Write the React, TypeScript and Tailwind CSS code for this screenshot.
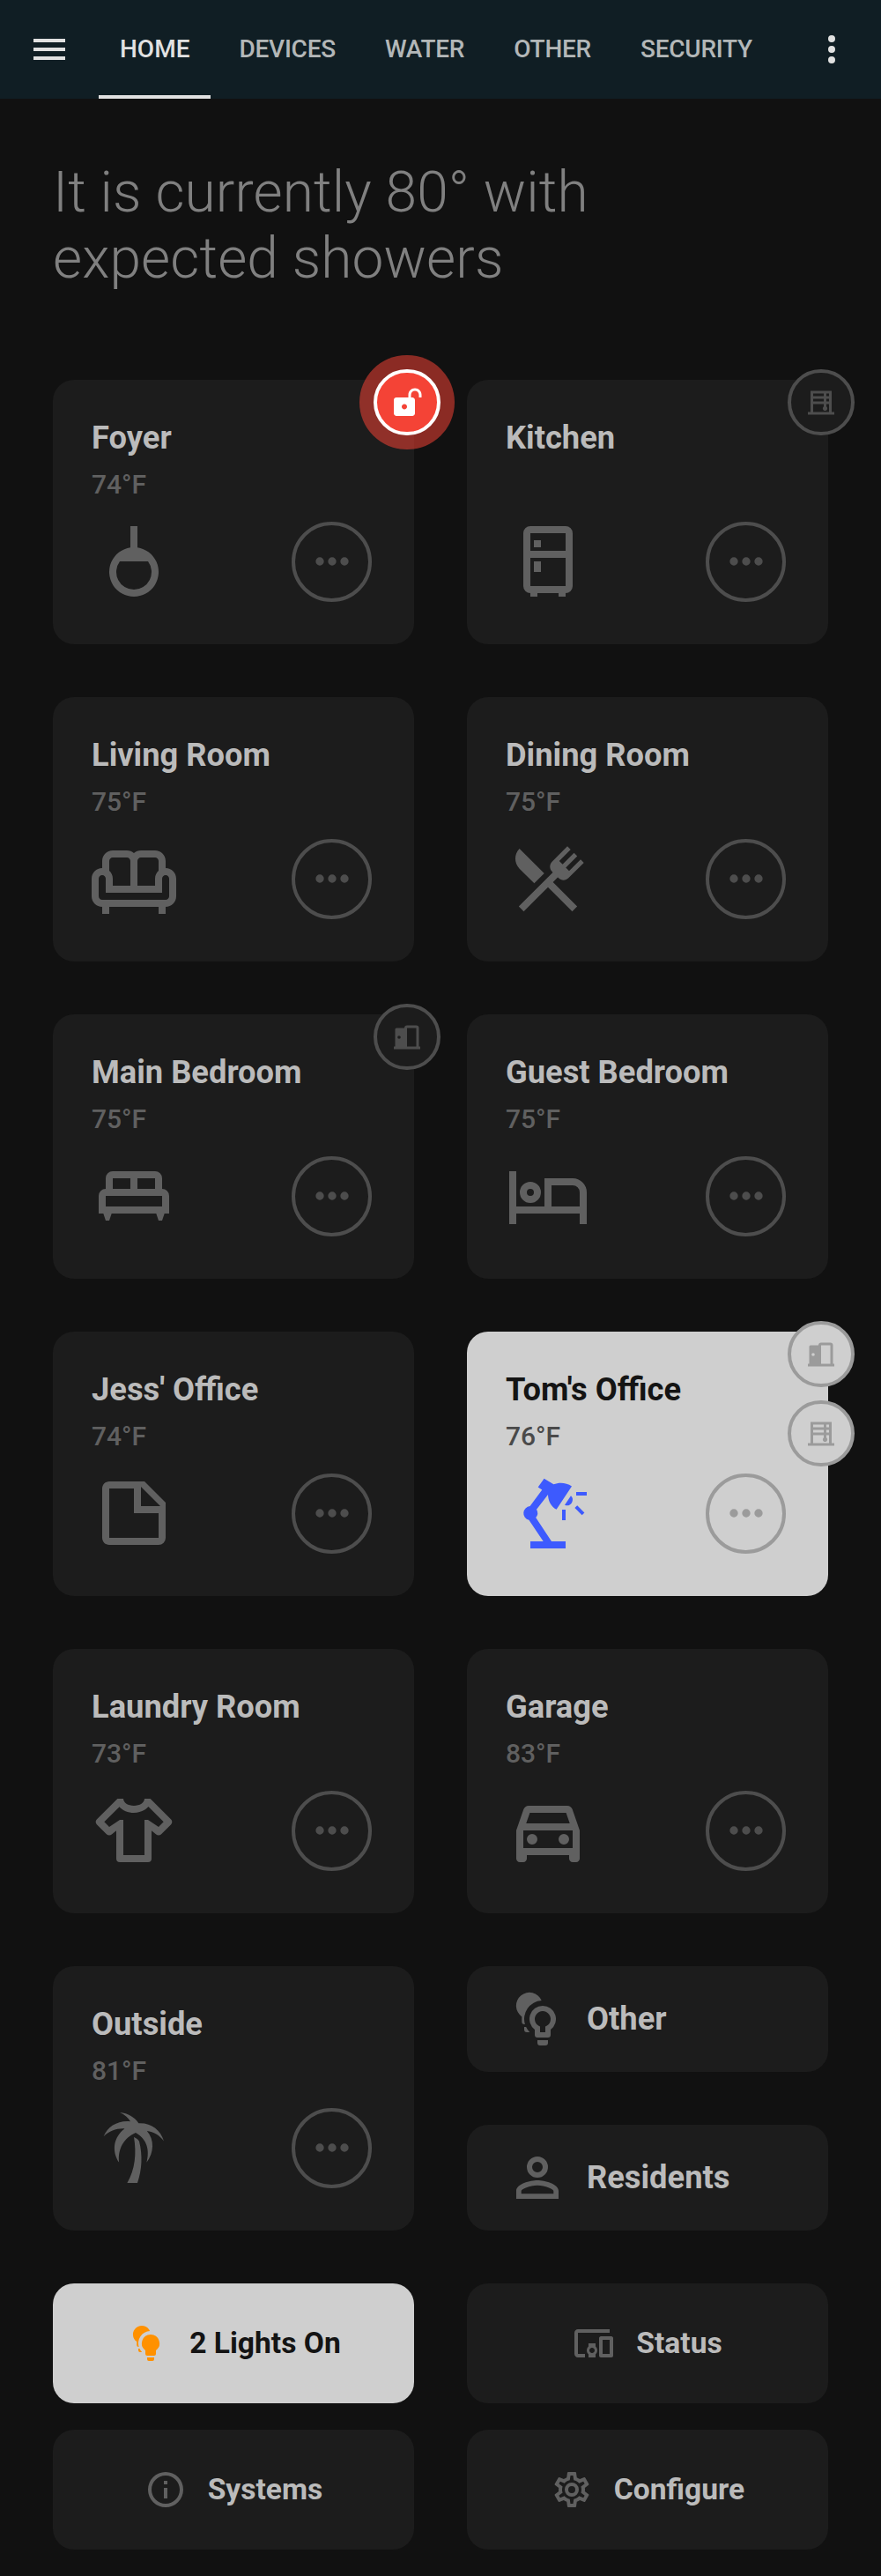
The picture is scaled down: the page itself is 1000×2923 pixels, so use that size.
import React from "react";

const PATHS = {
  menu: "M3 6H21V8H3V6M3 11H21V13H3V11M3 16H21V18H3V16Z",
  dotsVertical:
    "M12 16A2 2 0 0 1 14 18A2 2 0 0 1 12 20A2 2 0 0 1 10 18A2 2 0 0 1 12 16M12 10A2 2 0 0 1 14 12A2 2 0 0 1 12 14A2 2 0 0 1 10 12A2 2 0 0 1 12 10M12 4A2 2 0 0 1 14 6A2 2 0 0 1 12 8A2 2 0 0 1 10 6A2 2 0 0 1 12 4Z",
  dots: "M16 12A2 2 0 0 1 18 10A2 2 0 0 1 20 12A2 2 0 0 1 18 14A2 2 0 0 1 16 12M10 12A2 2 0 0 1 12 10A2 2 0 0 1 14 12A2 2 0 0 1 12 14A2 2 0 0 1 10 12M4 12A2 2 0 0 1 6 10A2 2 0 0 1 8 12A2 2 0 0 1 6 14A2 2 0 0 1 4 12Z",
  pendant: "M13 8.07V2H11V8.07A7 7 0 1 0 13 8.07M12 20A5 5 0 0 1 8 12H16A5 5 0 0 1 12 20Z",
  fridge:
    "M9,21V22H7V21A2,2 0 0,1 5,19V4A2,2 0 0,1 7,2H17A2,2 0 0,1 19,4V19A2,2 0 0,1 17,21V22H15V21H9M7,4V9H17V4H7M7,19H17V11H7V19M8,12H10V15H8V12M8,6H10V8H8V6Z",
  sofa: "M21 9V7C21 5.35 19.65 4 18 4H14C13.23 4 12.53 4.3 12 4.78C11.47 4.3 10.77 4 10 4H6C4.35 4 3 5.35 3 7V9C1.35 9 0 10.35 0 12V17C0 18.65 1.35 20 3 20V22H5V20H19V22H21V20C22.65 20 24 18.65 24 17V12C24 10.35 22.65 9 21 9M14 6H18C18.55 6 19 6.45 19 7V9.78C18.39 10.33 18 11.12 18 12V14H13V7C13 6.45 13.45 6 14 6M5 7C5 6.45 5.45 6 6 6H10C10.55 6 11 6.45 11 7V14H6V12C6 11.12 5.61 10.33 5 9.78V7M22 17C22 17.55 21.55 18 21 18H3C2.45 18 2 17.55 2 17V12C2 11.45 2.45 11 3 11S4 11.45 4 12V16H20V12C20 11.45 20.45 11 21 11S22 11.45 22 12V17Z",
  silverware:
    "M8.1,13.34L3.91,9.16C2.35,7.59 2.35,5.06 3.91,3.5L10.93,10.5L8.1,13.34M13.41,13L20.29,19.88L18.88,21.29L12,14.41L5.12,21.29L3.71,19.88L13.36,10.22L13.16,10C12.38,9.23 12.38,7.97 13.16,7.19L17.5,2.82L18.43,3.74L15.19,7L16.15,7.94L19.39,4.69L20.31,5.61L17.06,8.85L18,9.81L21.26,6.56L22.18,7.5L17.81,11.84C17.03,12.62 15.77,12.62 15,11.84L14.78,11.64L13.41,13Z",
  bedDouble:
    "M20,10V7A2,2 0 0,0 18,5H6A2,2 0 0,0 4,7V10A2,2 0 0,0 2,12V17H3.33L4,19H5L5.67,17H18.33L19,19H20L20.67,17H22V12A2,2 0 0,0 20,10M13,7H18V10H13V7M6,7H11V10H6V7M20,15H4V12H20V15Z",
  bedSingle:
    "M7,14A3,3 0 0,0 10,11A3,3 0 0,0 7,8A3,3 0 0,0 4,11A3,3 0 0,0 7,14M7,10A1,1 0 0,1 8,11A1,1 0 0,1 7,12A1,1 0 0,1 6,11A1,1 0 0,1 7,10M19,7H11V15H3V5H1V20H3V17H21V20H23V11A4,4 0 0,0 19,7M21,15H13V9H19A2,2 0 0,1 21,11V15Z",
  note: "M14,10H19.5L14,4.5V10M5,3H15L21,9V19A2,2 0 0,1 19,21H5C3.89,21 3,20.1 3,19V5C3,3.89 3.89,3 5,3M5,5V19H19V12H12V5H5Z",
  deskLamp:
    "M7 20V22H17V20H13L8.55 13.27A2 2 0 0 0 8.75 10.95L12 6.75C12.05 8.5 12.8 10.1 14.4 10.95L18.75 4.4C17.2 3.3 15.2 3.2 13.6 3.83L10.9 2.17L9.17 4.6L10.33 5.4L6.9 10.02A2 2 0 0 0 6.6 13.96L10.67 20H7M16.75 9.67C17.5 10.05 18.35 9.75 18.75 9.05C19.15 8.35 19.1 7.55 18.5 7.08L16.75 9.67M20 6H23V7H20V6M16 11H17V14H16V11M20.3 9.8L22.35 11.85L21.65 12.55L19.6 10.5L20.3 9.8Z",
  shirt:
    "M16,21H8A1,1 0 0,1 7,20V12.07L5.7,13.12C5.31,13.5 4.68,13.5 4.29,13.12L1.46,10.29C1.07,9.9 1.07,9.27 1.46,8.88L7.34,3H9C9,4.1 10.34,5 12,5C13.66,5 15,4.1 15,3H16.66L22.54,8.88C22.93,9.27 22.93,9.9 22.54,10.29L19.71,13.12C19.32,13.5 18.69,13.5 18.3,13.12L17,12.07V20A1,1 0 0,1 16,21M20.42,9.58L16.11,5.28C15.8,5.63 15.43,5.94 15,6.2C14.16,6.7 13.13,7 12,7C10.3,7 8.79,6.32 7.88,5.3L3.58,9.58L5,11L8,9H9V19H15V9H16L19,11L20.42,9.58Z",
  car: "M18.92 6.01C18.72 5.42 18.16 5 17.5 5H6.5C5.84 5 5.29 5.42 5.08 6.01L3 12V20C3 20.55 3.45 21 4 21H5C5.55 21 6 20.55 6 20V19H18V20C18 20.55 18.45 21 19 21H20C20.55 21 21 20.55 21 20V12L18.92 6.01M6.85 7H17.14L18.18 10H5.81L6.85 7M19 17H5V12H19V17M7.5 13A1.5 1.5 0 0 1 7.5 16A1.5 1.5 0 0 1 7.5 13M16.5 13A1.5 1.5 0 0 1 16.5 16A1.5 1.5 0 0 1 16.5 13Z",
  palm: "M8 2C10.4 2.2 12.2 3.4 13.35 5.05C17 4.9 19.5 6.9 20.5 10.1C19.2 8.4 17.6 7.5 15.7 7.25C17.9 9.8 17.7 13.4 15.6 16.2C16.5 12.8 15.8 9.6 12.5 7.75C9.2 9.2 7.3 12.4 7.8 16.2C5.6 12.9 6.2 9 9.35 6.6C7 6.5 5.1 7.2 3.4 8.8C4.6 5.9 7.5 4.2 11 4.55C10.4 3.5 9.4 2.6 8 2M12 9C12.7 9.3 13.2 9.7 13.5 10.2C14.5 14.2 14.3 18.2 13 22H10.1C12.3 18.2 12.8 13.8 12 9Z",
  bulbsOutline:
    "M13.56 5A5 5 0 1 0 6.1 11.06V13A1 1 0 0 0 7.1 14H7.3A7 7 0 0 1 13.56 5M7 15V16A1 1 0 0 0 8 17H9.1A7 7 0 0 1 7.7 15H7M14 7A5 5 0 0 0 11 16V18A1 1 0 0 0 12 19H16A1 1 0 0 0 17 18V16A5 5 0 0 0 14 7M15 14.83V17H13V14.83A3 3 0 1 1 15 14.83M12 20V21A1 1 0 0 0 13 22H15A1 1 0 0 0 16 21V20H12Z",
  bulbs:
    "M13.56 5A5 5 0 1 0 6.1 11.06V13A1 1 0 0 0 7.1 14H7.3A7 7 0 0 1 13.56 5M7 15V16A1 1 0 0 0 8 17H9.1A7 7 0 0 1 7.7 15H7M14 7A5 5 0 0 0 11 16V18A1 1 0 0 0 12 19H16A1 1 0 0 0 17 18V16A5 5 0 0 0 14 7M12 20V21A1 1 0 0 0 13 22H15A1 1 0 0 0 16 21V20H12Z",
  account:
    "M12,4A4,4 0 0,1 16,8A4,4 0 0,1 12,12A4,4 0 0,1 8,8A4,4 0 0,1 12,4M12,6A2,2 0 0,0 10,8A2,2 0 0,0 12,10A2,2 0 0,0 14,8A2,2 0 0,0 12,6M12,13C14.67,13 20,14.33 20,17V20H4V17C4,14.33 9.33,13 12,13M12,14.9C9.03,14.9 5.9,16.36 5.9,17V18.1H18.1V17C18.1,16.36 14.97,14.9 12,14.9Z",
  devices:
    "M3 6h18V4H3c-1.1 0-2 .9-2 2v12c0 1.1.9 2 2 2h4v-2H3V6zm10 6H9v1.78c-.61.55-1 1.33-1 2.22s.39 1.67 1 2.22V20h4v-1.78c.61-.55 1-1.34 1-2.22s-.39-1.67-1-2.22V12zm-2 5.5c-.83 0-1.5-.67-1.5-1.5s.67-1.5 1.5-1.5 1.5.67 1.5 1.5-.67 1.5-1.5 1.5zM22 8h-6c-.5 0-1 .5-1 1v10c0 .5.5 1 1 1h6c.5 0 1-.5 1-1V9c0-.5-.5-1-1-1zm-1 10h-4v-8h4v8z",
  info: "M11,9H13V7H11M12,20C7.59,20 4,16.41 4,12C4,7.59 7.59,4 12,4C16.41,4 20,7.59 20,12C20,16.41 16.41,20 12,20M12,2A10,10 0 0,0 2,12A10,10 0 0,0 12,22A10,10 0 0,0 22,12A10,10 0 0,0 12,2M11,17H13V11H11V17Z",
  cog: "M12,8A4,4 0 0,1 16,12A4,4 0 0,1 12,16A4,4 0 0,1 8,12A4,4 0 0,1 12,8M12,10A2,2 0 0,0 10,12A2,2 0 0,0 12,14A2,2 0 0,0 14,12A2,2 0 0,0 12,10M10,22C9.75,22 9.54,21.82 9.5,21.58L9.13,18.93C8.5,18.68 7.96,18.34 7.44,17.94L4.95,18.95C4.73,19.03 4.46,18.95 4.34,18.73L2.34,15.27C2.21,15.05 2.27,14.78 2.46,14.63L4.57,12.97L4.5,12L4.57,11L2.46,9.37C2.27,9.22 2.21,8.95 2.34,8.73L4.34,5.27C4.46,5.05 4.73,4.96 4.95,5.05L7.44,6.05C7.96,5.66 8.5,5.32 9.13,5.07L9.5,2.42C9.54,2.18 9.75,2 10,2H14C14.25,2 14.46,2.18 14.5,2.42L14.87,5.07C15.5,5.32 16.04,5.66 16.56,6.05L19.05,5.05C19.27,4.96 19.54,5.05 19.66,5.27L21.66,8.73C21.79,8.95 21.73,9.22 21.54,9.37L19.43,11L19.5,12L19.43,13L21.54,14.63C21.73,14.78 21.79,15.05 21.66,15.27L19.66,18.73C19.54,18.95 19.27,19.04 19.05,18.95L16.56,17.95C16.04,18.34 15.5,18.68 14.87,18.93L14.5,21.58C14.46,21.82 14.25,22 14,22H10M11.25,4L10.88,6.61C9.68,6.86 8.62,7.5 7.85,8.39L5.44,7.35L4.69,8.65L6.8,10.2C6.4,11.37 6.4,12.64 6.8,13.8L4.68,15.36L5.43,16.66L7.86,15.62C8.63,16.5 9.68,17.14 10.87,17.38L11.24,20H12.76L13.13,17.39C14.32,17.14 15.37,16.5 16.14,15.62L18.57,16.66L19.32,15.36L17.2,13.81C17.6,12.64 17.6,11.37 17.2,10.2L19.31,8.65L18.56,7.35L16.15,8.39C15.38,7.5 14.32,6.86 13.12,6.62L12.75,4H11.25Z",
  lockOpen:
    "M18 1C15.24 1 13 3.24 13 6V8H4C2.9 8 2 8.89 2 10V20C2 21.11 2.9 22 4 22H16C17.11 22 18 21.11 18 20V10C18 8.9 17.11 8 16 8H15V6C15 4.34 16.34 3 18 3C19.66 3 21 4.34 21 6V8H23V6C23 3.24 20.76 1 18 1M10 13C11.1 13 12 13.89 12 15C12 16.11 11.11 17 10 17C8.9 17 8 16.11 8 15C8 13.9 8.9 13 10 13Z",
  blinds:
    "M20 19V3H4V19H2V21H22V19H20M16 9H18V11H16V9M14 11H6V9H14V11M18 7H16V5H18V7M14 5V7H6V5H14M6 19V13H14V14.82C13.55 15.14 13.25 15.66 13.25 16.25C13.25 17.22 14.03 18 15 18S16.75 17.22 16.75 16.25C16.75 15.66 16.45 15.13 16 14.82V13H18V19H6Z",
  door: "M12 3H19A2 2 0 0 1 21 5V19H22V21H2V19H3V6A1 1 0 0 1 4 5H10A2 2 0 0 1 12 3M12 5V19H19V5H12M6 10.8A1.2 1.2 0 0 0 6 13.2A1.2 1.2 0 0 0 6 10.8Z",
};

type IconName = keyof typeof PATHS;

function Icon({ name, className }: { name: IconName; className: string }) {
  return (
    <svg viewBox="0 0 24 24" className={`block shrink-0 ${className}`} fill="currentColor" fillRule="evenodd" aria-hidden="true">
      <path d={PATHS[name]} />
    </svg>
  );
}

type Badge = { icon: IconName; alert?: boolean };

function StatusBadge({ icon, alert, on }: Badge & { on?: boolean }) {
  const tone = alert
    ? "border-white bg-[#f44336] text-white shadow-[0_0_0_16px_rgba(244,67,54,0.54)]"
    : on
      ? "border-[#9b9b9b] bg-[#cfcfcf] text-[#9b9b9b]"
      : "border-[#4d4d4d] bg-[#1c1c1c] text-[#4d4d4d]";
  return (
    <div className={`flex h-[75px] w-[76px] items-center justify-center rounded-full border-4 ${tone}`}>
      <Icon name={icon} className="size-9" />
    </div>
  );
}

type Room = { name: string; temp?: string; icon: IconName; on?: boolean; badges?: Badge[] };

function RoomCard({ name, temp, icon, on, badges }: Room) {
  return (
    <section
      className={`relative flex h-[300px] flex-col justify-between rounded-3xl pt-[45px] pr-12 pb-[46px] pl-11 ${
        on ? "bg-[#cfcfcf]" : "bg-[#1c1c1c]"
      }`}
    >
      <div>
        <h2 className={`text-[36.3px] leading-[41px] font-bold ${on ? "text-[#141414]" : "text-[#bbbbbb]"}`}>{name}</h2>
        {temp && (
          <p className={`mt-[15px] text-[30px] leading-[35px] font-medium ${on ? "text-[#4a4a4a]" : "text-[#606060]"}`}>
            {temp}
          </p>
        )}
      </div>
      <div className="flex items-center justify-between">
        <Icon name={icon} className={`size-24 ${on ? "text-[#3d5afe]" : "text-[#606060]"}`} />
        <button
          className={`flex size-[91px] items-center justify-center rounded-full border-4 ${
            on ? "border-[#9b9b9b] text-[#9b9b9b]" : "border-[#4d4d4d] text-[#4d4d4d]"
          }`}
        >
          <Icon name="dots" className="size-14" />
        </button>
      </div>
      {badges && (
        <div className="absolute -top-3 -right-[30px] flex flex-col gap-[15px]">
          {badges.map((b) => (
            <StatusBadge key={b.icon} {...b} on={on} />
          ))}
        </div>
      )}
    </section>
  );
}

function LinkCard({ name, icon }: { name: string; icon: IconName }) {
  return (
    <section className="flex h-[120px] items-center gap-5 rounded-3xl bg-[#1c1c1c] pl-11">
      <Icon name={icon} className="size-[72px] text-[#606060]" />
      <h2 className="pb-0.5 text-[36.3px] leading-[43px] font-bold text-[#bbbbbb]">{name}</h2>
    </section>
  );
}

function ActionButton({ label, icon, on }: { label: string; icon: IconName; on?: boolean }) {
  return (
    <button
      className={`flex h-[136px] items-center justify-center gap-6 rounded-3xl text-[33.6px] font-bold ${
        on ? "bg-[#cfcfcf] text-[#141414]" : "bg-[#1c1c1c] text-[#bbbbbb]"
      }`}
    >
      <Icon name={icon} className={`size-12 ${on ? "text-[#ff9100]" : "text-[#606060]"}`} />
      {label}
    </button>
  );
}

const TABS = ["HOME", "DEVICES", "WATER", "OTHER", "SECURITY"];

const ROOMS: Room[] = [
  { name: "Foyer", temp: "74°F", icon: "pendant", badges: [{ icon: "lockOpen", alert: true }] },
  { name: "Kitchen", icon: "fridge", badges: [{ icon: "blinds" }] },
  { name: "Living Room", temp: "75°F", icon: "sofa" },
  { name: "Dining Room", temp: "75°F", icon: "silverware" },
  { name: "Main Bedroom", temp: "75°F", icon: "bedDouble", badges: [{ icon: "door" }] },
  { name: "Guest Bedroom", temp: "75°F", icon: "bedSingle" },
  { name: "Jess' Office", temp: "74°F", icon: "note" },
  { name: "Tom's Office", temp: "76°F", icon: "deskLamp", on: true, badges: [{ icon: "door" }, { icon: "blinds" }] },
  { name: "Laundry Room", temp: "73°F", icon: "shirt" },
  { name: "Garage", temp: "83°F", icon: "car" },
  { name: "Outside", temp: "81°F", icon: "palm" },
];

export default function App() {
  return (
    <div className="min-h-[2923px] w-[1000px] bg-[#111111] font-['Roboto',sans-serif]">
      <header className="flex h-28 items-center bg-[#101e24] px-8 text-[#e1e1e1]">
        <Icon name="menu" className="size-12" />
        <nav className="ml-8 flex h-full flex-1 gap-2">
          {TABS.map((tab, i) => (
            <a
              key={tab}
              className={`flex h-full items-center border-b-4 px-6 pt-1 text-[28px] font-medium ${
                i === 0 ? "border-[#e1e1e1]" : "border-transparent tracking-[-0.24px] text-[#b3b7b8]"
              }`}
            >
              {tab}
            </a>
          ))}
        </nav>
        <Icon name="dotsVertical" className="size-12" />
      </header>

      <main className="px-[60px]">
        <h1 className="pt-[69px] text-[64px] leading-[75px] font-light tracking-[0.12px] text-[#808080]">
          It is currently 80° with
          <br />
          expected showers
        </h1>

        <div className="mt-[100px] grid grid-cols-2 gap-[60px]">
          {ROOMS.map((room) => (
            <RoomCard key={room.name} {...room} />
          ))}
          <div className="flex flex-col gap-[60px]">
            <LinkCard name="Other" icon="bulbsOutline" />
            <LinkCard name="Residents" icon="account" />
          </div>
        </div>

        <div className="mt-[60px] grid grid-cols-2 gap-x-[60px] gap-y-[30px]">
          <ActionButton label="2 Lights On" icon="bulbs" on />
          <ActionButton label="Status" icon="devices" />
          <ActionButton label="Systems" icon="info" />
          <ActionButton label="Configure" icon="cog" />
        </div>
      </main>
    </div>
  );
}
